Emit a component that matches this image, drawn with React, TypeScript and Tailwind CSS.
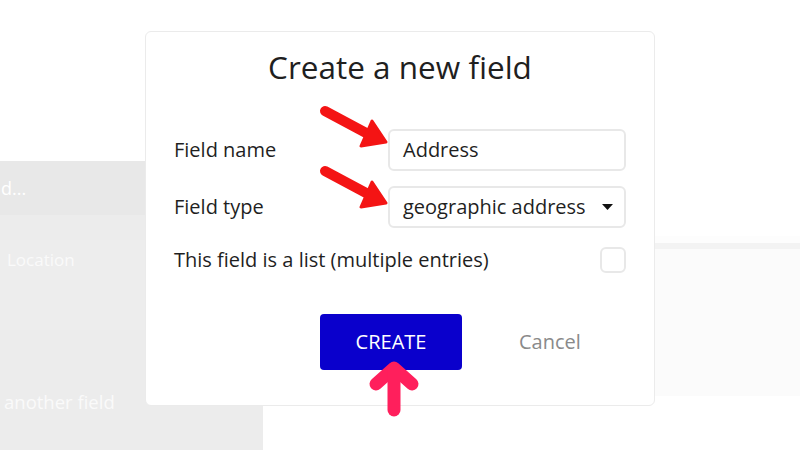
import React from "react";

const font = { fontFamily: '"Open Sans", "Noto Sans", sans-serif' };

const Arrows: React.FC = () => (
    <svg className="absolute inset-0 pointer-events-none" width="800" height="450" viewBox="0 0 800 450">
        {/* red arrows pointing at the inputs */}
        <g fill="#f41414" stroke="#f41414" strokeLinecap="round" strokeLinejoin="round">
            <line x1="325" y1="111" x2="368" y2="134" strokeWidth="10" />
            <polygon points="386,142 372,121 361,146" strokeWidth="3" />
            <line x1="325" y1="171" x2="368" y2="194" strokeWidth="10" />
            <polygon points="386,203 372,182 361,207" strokeWidth="3" />
        </g>
        {/* pink arrow under the button */}
        <g fill="none" stroke="#ff1f5c" strokeLinecap="round" strokeLinejoin="round" strokeWidth="13">
            <polyline points="376,384 394,368 412,384" />
            <line x1="394" y1="370" x2="394" y2="410" />
        </g>
    </svg>
);

const App: React.FC = () => {
    return (
        <div className="relative w-[800px] h-[450px] overflow-hidden bg-white" style={font}>
            {/* faded page behind the dialog */}
            <div className="flex h-full">
                <div className="w-[263px] mt-[161px] flex flex-col bg-[#ececec]">
                    <div className="h-[54px] bg-[#e8e8e8] flex items-center text-[18px] text-white pl-[1px]">d...</div>
                    <div className="h-[90px] mt-[25px] bg-[#ededed] pt-[7px] pl-[7px] text-[17px] text-[#fafafa]">Location</div>
                    <div className="flex-1 pt-[58px] pl-[4px] text-[18.5px] text-[#fafafa]">another field</div>
                </div>
                <div className="flex-1" />
                <div className="w-[145px] mt-[236px] h-[160px] bg-[#fbfbfb] flex flex-col">
                    <div className="h-[7px] bg-[#fdfdfd]" />
                    <div className="h-[6px] bg-[#f3f3f3]" />
                </div>
            </div>

            {/* dialog */}
            <div className="absolute left-[145px] top-[31px] w-[510px] h-[375px] bg-white border border-[#ebebeb] rounded-[6px] px-[28px]">
                <h1 className="text-center text-[31.5px] text-[#1f1f1f] mt-[14px] leading-[42px]">Create a new field</h1>
                <div className="mt-[41px] flex flex-col gap-[15px]">
                    <div className="flex items-center justify-between">
                        <span className="text-[20px] text-[#1f1f1f]">Field name</span>
                        <div className="w-[238px] h-[42px] border-2 border-[#e8e8e8] rounded-[6px] flex items-center px-[13px] text-[20px] text-[#1f1f1f]">
                            Address
                        </div>
                    </div>
                    <div className="flex items-center justify-between">
                        <span className="text-[20px] text-[#1f1f1f]">Field type</span>
                        <div className="w-[238px] h-[42px] border-2 border-[#e8e8e8] rounded-[6px] flex items-center justify-between pl-[13px] pr-[11px] text-[20px] text-[#1f1f1f]">
                            geographic address
                            <svg width="11" height="6" viewBox="0 0 11 6">
                                <polygon points="0,0 11,0 5.5,6" fill="#111" />
                            </svg>
                        </div>
                    </div>
                    <div className="flex items-center justify-between mt-[2px]">
                        <span className="text-[20px] text-[#1f1f1f]">This field is a list (multiple entries)</span>
                        <div className="w-[26px] h-[26px] border-2 border-[#e8e8e8] rounded-[6px]" />
                    </div>
                </div>
                <div className="flex items-center mt-[39px] pl-[146px]">
                    <button className="w-[142px] h-[56px] bg-[#0a00cc] rounded-[4px] text-white text-[20px]">CREATE</button>
                    <button className="ml-[57px] text-[20px] text-[#8a8a8a]">Cancel</button>
                </div>
            </div>

            <Arrows />
        </div>
    );
};

export default App;
